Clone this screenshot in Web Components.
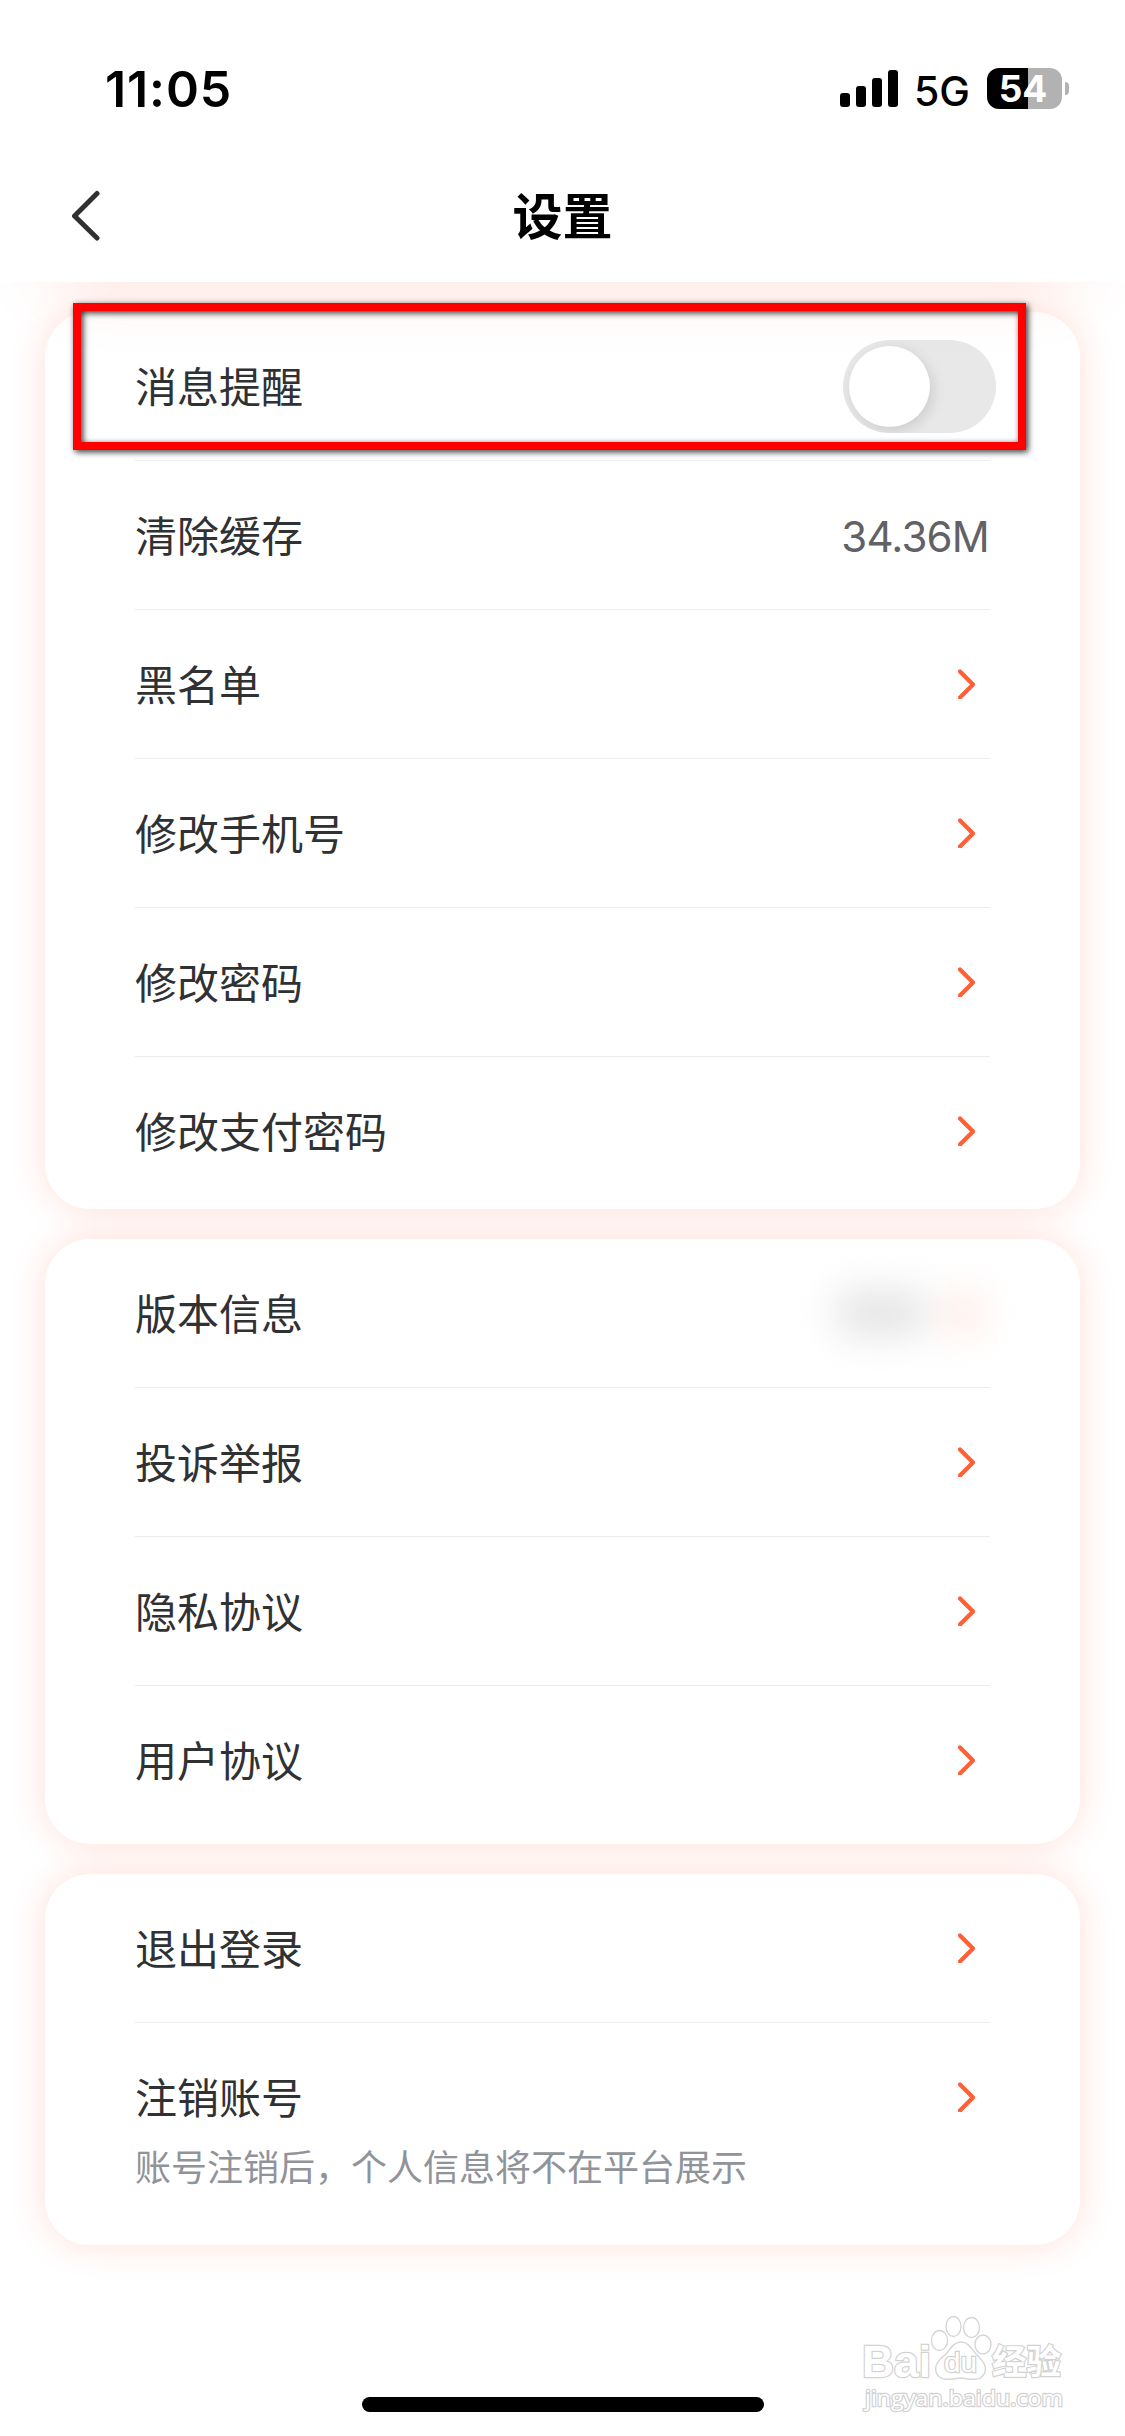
<!DOCTYPE html>
<html lang="zh-CN">
<head>
<meta charset="utf-8">
<title>设置</title>
<style>
html,body{margin:0;padding:0;background:#fff}
body{width:1125px;height:2436px;overflow:hidden;font-family:Inter,"Noto Sans CJK SC",sans-serif;color:#303133}
</style>
</head>
<body>
<settings-screen></settings-screen>
<script>
const define = (name, html) => {
  const t = document.createElement('template');
  t.innerHTML = html;
  customElements.define(name, class extends HTMLElement {
    constructor() {
      super();
      this.attachShadow({ mode: 'open' }).appendChild(t.content.cloneNode(true));
    }
  });
};

define('status-bar', `
<style>
:host{display:flex;height:133px;box-sizing:border-box;padding:56px 56px 0 105px;justify-content:space-between;align-items:flex-start;color:#000}
.time{font-size:50px;line-height:66px;font-weight:600;letter-spacing:.9px}
.right{display:flex;align-items:flex-start;padding-top:12px}
.sig{margin-top:2px;display:block}
.net{font-size:41px;line-height:41px;margin:3px 0 0 16px;width:73px;font-weight:450}
.bat{display:flex;align-items:center}
.cell{width:75px;height:41px;border-radius:12px;background:linear-gradient(90deg,#000 41px,#b2b2b2 41px);color:#fff;font-weight:700;font-size:37px;line-height:41px;text-align:center;text-indent:-3px}
.nub{width:4px;height:13px;margin-left:3px;border-radius:0 6px 6px 0;background:#b2b2b2}
</style>
<div class="time">11:05</div>
<div class="right">
<svg class="sig" width="58" height="37"><rect y="23" width="10" height="14" rx="3"/><rect x="16" y="16" width="10" height="21" rx="3"/><rect x="32" y="8" width="10" height="29" rx="3"/><rect x="48" width="10" height="37" rx="3"/></svg>
<div class="net">5G</div>
<div class="bat"><div class="cell">54</div><div class="nub"></div></div>
</div>`);

define('nav-bar', `
<style>
:host{display:grid;grid-template-columns:1fr auto 1fr;align-items:center;height:149px;padding:17px 70px 0;box-sizing:border-box;color:#000}
svg{display:block}
h1{margin:0;padding-top:2px;font-size:50px;line-height:70px;font-weight:700}
</style>
<svg width="32" height="52" viewBox="0 0 32 52" fill="none" stroke="#303133" stroke-width="5" stroke-linecap="round" stroke-linejoin="round"><path d="M27 3.500 4.500 26 27 48"/></svg>
<h1><slot></slot></h1>`);

define('go-arrow', `
<style>:host{display:block;width:17px;height:30px;margin-right:15px}svg{display:block}</style>
<svg width="17" height="30" viewBox="0 0 17 30" fill="none" stroke="#ff5f33" stroke-width="4.200" stroke-linecap="round" stroke-linejoin="round"><path d="M2 2.500 15 15.500 2 28.500"/></svg>`);

define('toggle-switch', `
<style>
:host{display:block;width:153px;height:93px;border-radius:47px;background:#e8e8e8;box-sizing:border-box;padding:6px;margin-right:-6px;overflow:hidden}
div{width:81px;height:81px;border-radius:50%;background:#fff;box-shadow:3px 4px 14px rgba(0,0,0,.12)}
</style><div></div>`);

define('blurred-value', `
<style>
:host{display:flex;align-items:center;gap:26px;filter:blur(20px);margin-right:13px}
.a{width:88px;height:40px;background:#e0e0e0;border-radius:10px}
.b{width:26px;height:38px;background:#ffdcd2;border-radius:10px}
</style><div class="a"></div><div class="b"></div>`);

define('setting-row', `
<style>
:host{display:flex;height:149px;box-sizing:border-box;align-items:center;justify-content:space-between;border-bottom:1px solid #ededed}
:host([last]){border-bottom-color:transparent}
.label{font-size:42px;line-height:60px;padding-top:3px}
::slotted(span){font-size:42px;color:#606266;font-weight:400;letter-spacing:-.8px;padding:2px 1px 0 0}
</style>
<div class="label"><slot name="label"></slot></div><slot></slot>`);

define('setting-label', `<style>:host{display:block}</style><slot></slot>`);

define('setting-card', `
<style>
:host{display:block;position:relative;padding:0 90px;box-sizing:border-box;border-radius:45px;background:#fff;box-shadow:0 0 35px rgba(255,90,50,.19)}
</style><slot></slot>`);

define('home-bar', `
<style>:host{display:block;width:402px;height:15px;border-radius:8px;background:#000}</style>`);

define('highlight-frame', `
<style>:host{position:absolute;left:73px;top:303px;width:953px;height:147px;box-sizing:border-box;border:8px solid #f00;filter:drop-shadow(2px 2px 3px rgba(0,0,0,.8))}</style>`);

define('water-mark', `
<style>
:host{position:absolute;left:858px;top:2310px}
svg{display:block;overflow:visible}
text{fill:#fff;stroke:#d2d2d2;stroke-width:2.400;paint-order:stroke}
.brand{font-family:"Liberation Sans",sans-serif}
.cn{font-family:"Noto Sans CJK SC",sans-serif}
.url{font-family:"Open Sans",sans-serif}
ellipse,path{fill:#fff;stroke:#d6d6d6;stroke-width:1.400}
</style>
<svg width="210" height="106" viewBox="0 0 210 106">
<text class="brand" x="4" y="67" font-size="44" font-weight="700" textLength="69" lengthAdjust="spacingAndGlyphs">Bai</text>
<ellipse cx="81.500" cy="30.500" rx="8" ry="10"/><ellipse cx="95.500" cy="16.500" rx="7.500" ry="10"/><ellipse cx="113.500" cy="17.500" rx="8" ry="10"/><ellipse cx="125" cy="34.500" rx="8" ry="9.500"/>
<path d="M103 32C111 32 114 40 119 45C125 51 129 56 127 62C124 71 115 70 103 68C90 70 81 71 78 62C76 54 82 49 88 44C92 40 95 32 103 32Z"/>
<text class="brand" x="86" y="62" font-size="28" textLength="33" lengthAdjust="spacingAndGlyphs">du</text>
<text class="cn" x="134" y="64" font-size="34" font-weight="700" textLength="69" lengthAdjust="spacingAndGlyphs">经验</text>
<text class="url" x="7" y="95.500" font-size="22" textLength="198" lengthAdjust="spacingAndGlyphs">jingyan.baidu.com</text>
</svg>`);

define('settings-screen', `
<style>
:host{display:flex;flex-direction:column;position:relative;width:1125px;height:2436px;background:#fff;overflow:hidden}
main{display:flex;flex-direction:column;gap:30px;padding:30px 45px 0;height:2115px;box-sizing:border-box;overflow:hidden;position:relative}
.haze{position:absolute;left:45px;right:45px;top:-300px;height:300px;border-radius:45px;box-shadow:0 0 72px rgba(255,90,50,.18)}
.c1{height:897px}.c2{height:605px}.c3{height:371px}
p{margin:0;margin-top:-24px;font-size:36px;line-height:40px;color:#909399}
footer{display:flex;justify-content:center;height:39px}
</style>
<status-bar></status-bar>
<nav-bar>设置</nav-bar>
<main>
<setting-card class="c1">
<setting-row><setting-label slot="label">消息提醒</setting-label><toggle-switch></toggle-switch></setting-row>
<setting-row><setting-label slot="label">清除缓存</setting-label><span>34.36M</span></setting-row>
<setting-row><setting-label slot="label">黑名单</setting-label><go-arrow></go-arrow></setting-row>
<setting-row><setting-label slot="label">修改手机号</setting-label><go-arrow></go-arrow></setting-row>
<setting-row><setting-label slot="label">修改密码</setting-label><go-arrow></go-arrow></setting-row>
<setting-row last><setting-label slot="label">修改支付密码</setting-label><go-arrow></go-arrow></setting-row>
</setting-card>
<setting-card class="c2">
<setting-row><setting-label slot="label">版本信息</setting-label><blurred-value></blurred-value></setting-row>
<setting-row><setting-label slot="label">投诉举报</setting-label><go-arrow></go-arrow></setting-row>
<setting-row><setting-label slot="label">隐私协议</setting-label><go-arrow></go-arrow></setting-row>
<setting-row last><setting-label slot="label">用户协议</setting-label><go-arrow></go-arrow></setting-row>
</setting-card>
<setting-card class="c3">
<setting-row><setting-label slot="label">退出登录</setting-label><go-arrow></go-arrow></setting-row>
<setting-row last><setting-label slot="label">注销账号</setting-label><go-arrow></go-arrow></setting-row>
<p>账号注销后，个人信息将不在平台展示</p>
</setting-card>
<div class="haze"></div>
</main>
<footer><home-bar></home-bar></footer>
<highlight-frame></highlight-frame>
<water-mark></water-mark>`);
</script>
</body>
</html>
